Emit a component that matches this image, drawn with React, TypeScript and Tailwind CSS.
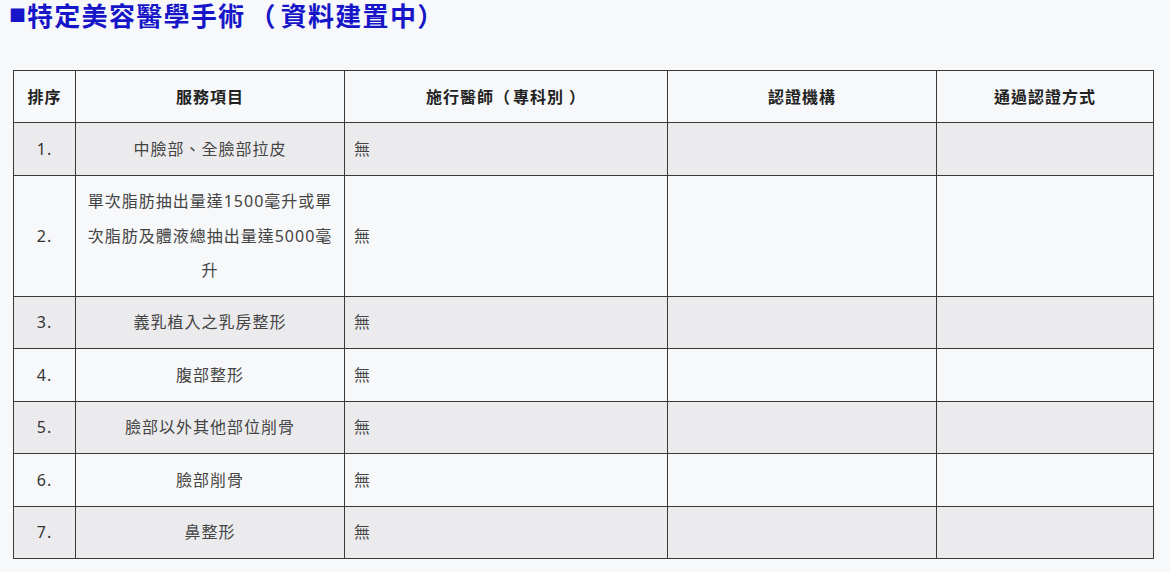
const rows = [
  { no: "1.", item: "中臉部、全臉部拉皮", shade: true },
  { no: "2.", item: "單次脂肪抽出量達1500毫升或單次脂肪及體液總抽出量達5000毫升", shade: false },
  { no: "3.", item: "義乳植入之乳房整形", shade: true },
  { no: "4.", item: "腹部整形", shade: false },
  { no: "5.", item: "臉部以外其他部位削骨", shade: true },
  { no: "6.", item: "臉部削骨", shade: false },
  { no: "7.", item: "鼻整形", shade: true },
];

const cell = "border border-[#3a3a3a] py-[8.57px] leading-[34.3px] align-middle";

export default function App() {
  return (
    <div
      className="min-h-[572px] w-full bg-[#f7f8fa] text-[#444]"
      style={{ fontFamily: '"Noto Sans", "Noto Sans CJK TC", sans-serif' }}
    >
      {/* 標題 */}
      <h2 className="flex items-center pl-[9px] h-[32px] text-[26px] font-bold leading-[30px] text-[#1616c8] tracking-[1.3px]">
        <span className="text-[17px] mr-[1px] tracking-normal">■</span>
        特定美容醫學手術<span className="ml-[4px] mr-[4px]">（</span>資料建置中<span className="ml-0">）</span>
      </h2>

      {/* 表格 */}
      <div className="pl-[13px] pr-[18px] pt-[38px]">
        <table className="w-[1140px] table-fixed border-collapse text-[16px] tracking-[1px]">
          <colgroup>
            <col className="w-[62px]" />
            <col className="w-[269px]" />
            <col className="w-[323px]" />
            <col className="w-[269px]" />
            <col className="w-[217px]" />
          </colgroup>
          <thead>
            <tr className="text-[#222] font-bold">
              <th className={`${cell} text-center`}>排序</th>
              <th className={`${cell} text-center`}>服務項目</th>
              <th className={`${cell} text-center`}>
                施行醫師<span className="mr-[2px]">（</span>專科別<span className="ml-[5px]">）</span>
              </th>
              <th className={`${cell} text-center`}>認證機構</th>
              <th className={`${cell} text-center`}>通過認證方式</th>
            </tr>
          </thead>
          <tbody>
            {rows.map((r) => (
              <tr key={r.no} className={r.shade ? "bg-[#ebebed]" : ""}>
                <td className={`${cell} text-center text-[#333]`}>{r.no}</td>
                <td className={`${cell} text-center px-[8px]`}>{r.item}</td>
                <td className={`${cell} px-[9px]`}>無</td>
                <td className={cell}></td>
                <td className={cell}></td>
              </tr>
            ))}
          </tbody>
        </table>
      </div>
    </div>
  );
}
